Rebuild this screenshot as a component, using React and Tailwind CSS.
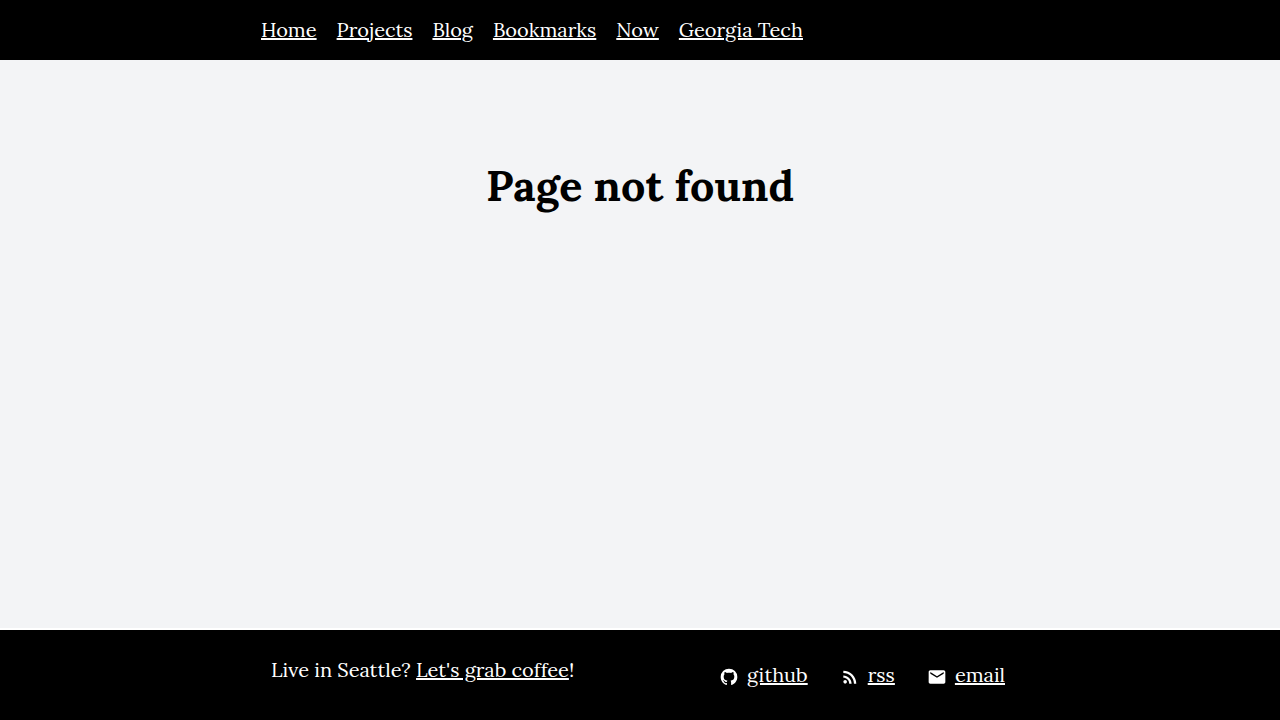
import React from "react";
import { MdEmail, MdRssFeed } from "react-icons/md";

const pages = ["Home", "Projects", "Blog", "Bookmarks", "Now", "Georgia Tech"];

function GithubIcon(props) {
  return (
    <svg viewBox="0 0 24 24" fill="currentColor" {...props}>
      <path d="M12 2A10 10 0 0 0 2 12c0 4.42 2.87 8.17 6.84 9.5.5.08.66-.23.66-.5v-1.69c-2.77.6-3.36-1.34-3.36-1.34-.46-1.16-1.11-1.47-1.11-1.47-.91-.62.07-.6.07-.6 1 .07 1.53 1.03 1.53 1.03.87 1.52 2.34 1.07 2.91.83.09-.65.35-1.09.63-1.34-2.22-.25-4.55-1.11-4.55-4.92 0-1.11.38-2 1.03-2.71-.1-.25-.45-1.29.1-2.64 0 0 .84-.27 2.75 1.02.79-.22 1.65-.33 2.5-.33s1.71.11 2.5.33c1.91-1.29 2.75-1.02 2.75-1.02.55 1.35.2 2.39.1 2.64.65.71 1.03 1.6 1.03 2.71 0 3.82-2.34 4.66-4.57 4.91.36.31.69.92.69 1.85V21c0 .27.16.59.67.5C19.14 20.16 22 16.42 22 12A10 10 0 0 0 12 2z" />
    </svg>
  );
}

const contacts = [
  { label: "github", Icon: GithubIcon },
  { label: "rss", Icon: MdRssFeed },
  { label: "email", Icon: MdEmail },
];

export default function App() {
  return (
    <div className="flex min-h-screen flex-col bg-gray-100 font-['Lora','Liberation_Serif',serif] text-xl text-black">
      <header className="bg-black text-white">
        <nav className="mx-auto flex h-15 max-w-[758px] items-center gap-5">
          {pages.map((page) => (
            <a key={page} href="#" className="underline">
              {page}
            </a>
          ))}
        </nav>
      </header>
      <main className="flex-1 pt-24">
        <h1 className="text-center text-[43px] leading-[60px] font-bold">Page not found</h1>
      </main>
      <footer className="border-t-2 border-white bg-black text-white">
        <div className="mx-auto flex h-[90px] max-w-[738px] items-start justify-between pt-[26px]">
          <p>
            Live in Seattle?{" "}
            <a href="#" className="underline">
              Let's grab coffee
            </a>
            !
          </p>
          <ul className="flex gap-8 pt-[5px] pr-1">
            {contacts.map(({ label, Icon }) => (
              <li key={label} className="flex items-center gap-2">
                <Icon className="mt-1 size-5" aria-hidden="true" />
                <a href="#" className="underline">
                  {label}
                </a>
              </li>
            ))}
          </ul>
        </div>
      </footer>
    </div>
  );
}
